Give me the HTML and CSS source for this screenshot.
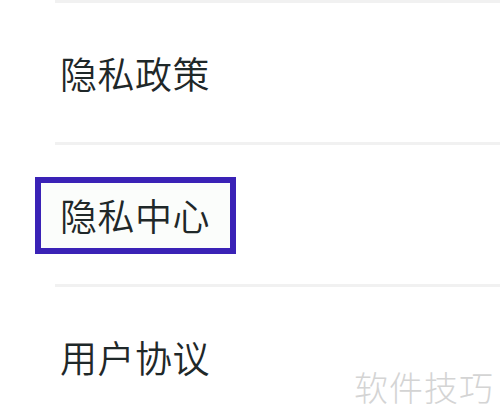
FILE: index.html
```html
<!DOCTYPE html>
<html>
<head>
    <meta charset="utf-8">
    <title>设置</title>
    <link rel="stylesheet" href="styles.css">
</head>
<body>
    <div class="menu-list">
        <div class="menu-item">
            <span class="menu-label">隐私政策</span>
        </div>
        <div class="menu-item">
            <span class="menu-label highlight">隐私中心</span>
        </div>
        <div class="menu-item">
            <span class="menu-label">用户协议</span>
        </div>
    </div>
    <div class="watermark">软件技巧</div>
</body>
</html>
```

FILE: styles.css
```css
body {
    font-family: "Noto Sans CJK SC", "Noto Sans", sans-serif;
    margin: 0;
    background: #ffffff;
    color: #1f2829;
    overflow: hidden;
}
.menu-list {
    display: flex;
    flex-direction: column;
}
.menu-item {
    display: flex;
    align-items: center;
    height: 139px;
    margin-left: 55px;
    padding-left: 5px;
    padding-top: 5px;
    box-sizing: border-box;
    border-top: 3px solid #f1f1f1;
    margin-bottom: 3px;
}
.menu-label {
    font-size: 37px;
    font-weight: 350;
    line-height: 1;
    letter-spacing: 0.5px;
}
.highlight {
    border: 6px solid #3a22b6;
    padding: 14px 20px 14px 19px;
    margin-left: -25px;
    background: #fbfdfb;
}
.watermark {
    position: absolute;
    right: 6px;
    top: 362px;
    font-size: 34px;
    font-weight: 300;
    color: #d4d4d4;
    letter-spacing: 1px;
}
```
